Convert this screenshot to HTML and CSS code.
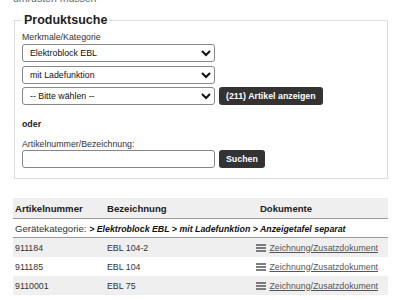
FILE: index.html
```html
<!DOCTYPE html>
<html lang="de">

<head>
  <meta charset="UTF-8" />
  <meta name="viewport" content="width=device-width, initial-scale=1.0" />
  <title>Produktsuche</title>
  <link rel="stylesheet" href="styles.css">
</head>

<body>
  <div class="page">
    <p class="intro">umrüsten müssen</p>

    <fieldset class="search">
      <legend>Produktsuche</legend>

      <label for="cat1" class="label-first">Merkmale/Kategorie</label>
      <div class="row">
        <select id="cat1" class="field">
          <option>Elektroblock EBL</option>
        </select>
      </div>
      <div class="row">
        <select id="cat2" class="field">
          <option>mit Ladefunktion</option>
        </select>
      </div>
      <div class="row">
        <select id="cat3" class="field">
          <option>-- Bitte wählen --</option>
        </select>
        <button class="btn">(211) Artikel anzeigen</button>
      </div>

      <p class="or">oder</p>

      <label for="query" class="label-query">Artikelnummer/Bezeichnung:</label>
      <div class="row">
        <input type="text" id="query" class="field" />
        <button class="btn">Suchen</button>
      </div>
    </fieldset>

    <table class="results">
      <thead>
        <tr>
          <th class="col-nr">Artikelnummer</th>
          <th class="col-name">Bezeichnung</th>
          <th class="col-docs">Dokumente</th>
        </tr>
      </thead>
      <tbody>
        <tr class="category">
          <td colspan="3">Gerätekategorie: <b><i>&gt; Elektroblock EBL &gt; mit Ladefunktion &gt; Anzeigetafel separat</i></b></td>
        </tr>
        <tr>
          <td>911184</td>
          <td>EBL 104-2</td>
          <td class="docs">
            <svg class="doc-icon" width="10" height="8" viewBox="0 0 10 8"><path d="M0 1h10M0 4h10M0 7h10" stroke="#555" stroke-width="1.4"/></svg>
            <a href="#">Zeichnung/Zusatzdokument</a>
          </td>
        </tr>
        <tr>
          <td>911185</td>
          <td>EBL 104</td>
          <td class="docs">
            <svg class="doc-icon" width="10" height="8" viewBox="0 0 10 8"><path d="M0 1h10M0 4h10M0 7h10" stroke="#555" stroke-width="1.4"/></svg>
            <a href="#">Zeichnung/Zusatzdokument</a>
          </td>
        </tr>
        <tr>
          <td>9110001</td>
          <td>EBL 75</td>
          <td class="docs">
            <svg class="doc-icon" width="10" height="8" viewBox="0 0 10 8"><path d="M0 1h10M0 4h10M0 7h10" stroke="#555" stroke-width="1.4"/></svg>
            <a href="#">Zeichnung/Zusatzdokument</a>
          </td>
        </tr>
      </tbody>
    </table>
  </div>
</body>

</html>
```

FILE: styles.css
```css
body {
  font-family: 'Liberation Sans', Arial, sans-serif;
  font-size: 8.8px;
  color: #222;
  background-color: #fff;
  margin: 0;
  padding: 0;
}

.page {
  padding: 0 5px 0 13px;
}

.intro {
  margin: -8px 0 0;
  height: 13px;
  line-height: 12px;
  font-size: 10.5px;
  color: #666;
}

.search {
  margin: 8px 0 0 1px;
  padding: 0 7px 6.5px;
  border: 1px solid #ddd;
}

.search legend {
  font-size: 12.5px;
  font-weight: bold;
  color: #222;
  padding: 0 2px;
  margin-left: 0;
}

.search label {
  display: block;
  color: #333;
  line-height: 10px;
}

.label-first {
  margin: 5px 0 2px;
}

.label-query {
  margin: 0 0 1px;
}

.row {
  display: flex;
  gap: 4px;
  margin-bottom: 3.5px;
}

.field {
  width: 193px;
  height: 18px;
  box-sizing: border-box;
  border: 1px solid #888;
  border-radius: 3px;
  background-color: #fff;
  font-family: inherit;
  font-size: 8.8px;
  color: #111;
  padding: 0 3px;
}

.btn {
  height: 18px;
  padding: 0 7px;
  border: none;
  border-radius: 3px;
  background-color: #333;
  color: #fff;
  font-family: inherit;
  font-size: 8.8px;
  font-weight: bold;
  cursor: pointer;
}

.or {
  font-weight: bold;
  line-height: 10px;
  margin: 14px 0 10px;
}

.results {
  width: 375px;
  margin-top: 19px;
  border-collapse: collapse;
}

.results th {
  background-color: #efefef;
  text-align: left;
  font-size: 9.6px;
  font-weight: bold;
  color: #222;
  padding: 0 2px;
  height: 20px;
  border-bottom: 1px solid #999;
}

.results th.col-docs {
  text-align: center;
}

.col-nr {
  width: 88px;
}

.col-name {
  width: 75px;
}

.results td {
  padding: 0 2px;
  height: 19px;
  color: #333;
}

.results tbody tr:nth-child(even) td {
  background-color: #efefef;
}

.results .category td {
  height: 18px;
  font-size: 9.6px;
  border-bottom: 1px solid #999;
  color: #333;
}

.results .category b {
  color: #111;
  font-size: 8.8px;
}

.results td.docs {
  text-align: right;
  padding-right: 10px;
}

.doc-icon {
  vertical-align: -1px;
  margin-right: 1px;
}

.docs a {
  color: #555;
}
```
